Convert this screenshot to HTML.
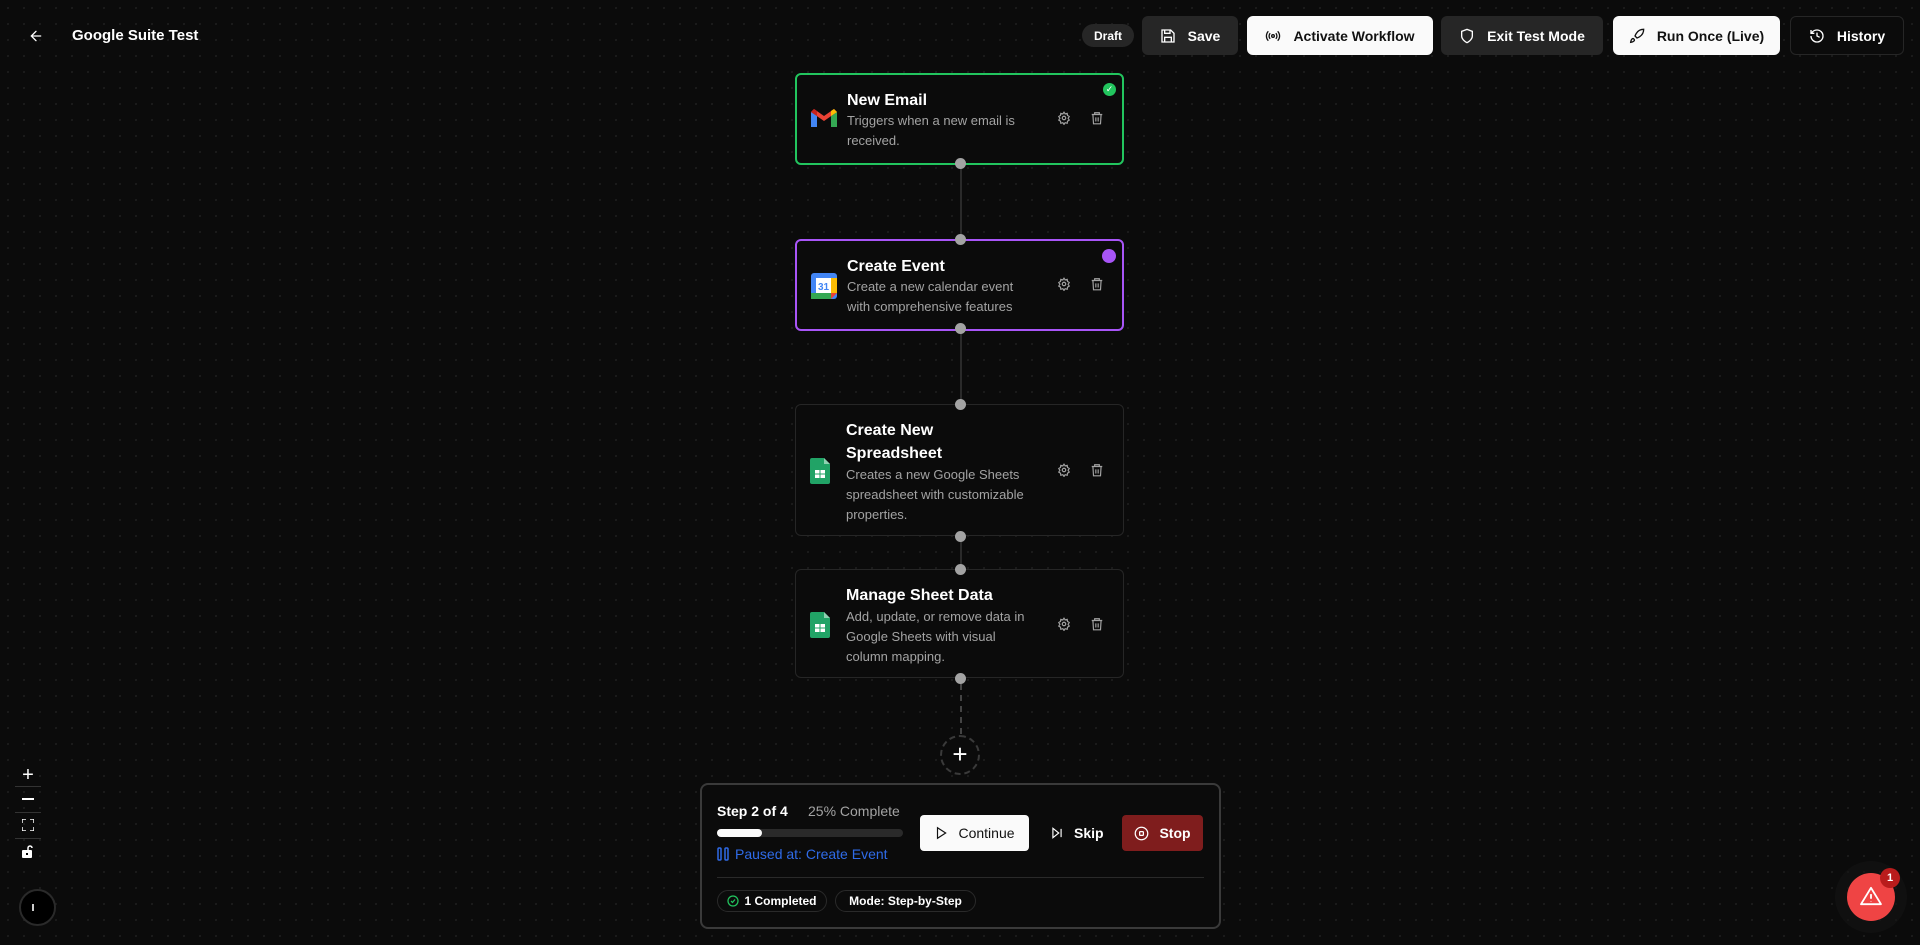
<!DOCTYPE html>
<html><head><meta charset="utf-8"><style>
*{box-sizing:border-box;margin:0;padding:0}
body{width:1920px;height:945px;overflow:hidden;background:#0b0b0b;background-image:radial-gradient(circle,#1c1c1c 1px,transparent 1.2px);background-size:16px 16px;font-family:"Liberation Sans",sans-serif;color:#fff;position:relative}
.a{position:absolute}
.btn{position:absolute;top:16px;height:39px;border-radius:6px;display:flex;align-items:center;justify-content:center;gap:12px;font-size:14px;font-weight:bold}
.dk{background:#262626;color:#fff}
.wt{background:#fafafa;color:#111}
.card{position:absolute;left:795px;width:329px;background:#0b0b0b;border:1px solid #262626;border-radius:6px}
.ttl{position:absolute;left:50px;font-size:16px;font-weight:bold;line-height:23px}
.ds{position:absolute;left:50px;font-size:13px;color:#a3a3a3;line-height:20px;width:200px}
.ic{position:absolute;left:14px}
.dot{position:absolute;left:955px;width:11px;height:11px;border-radius:50%;background:#a3a3a3}
.ln{position:absolute;left:959.5px;width:2px;background:#2a2a2a}
</style></head><body>
<svg class="a" style="left:28px;top:28px" width="16" height="16" viewBox="0 0 24 24" fill="none" stroke="#fff" stroke-width="2" stroke-linecap="round"><path d="M19 12H5M12 19l-7-7 7-7"/></svg>
<div class="a" style="left:72px;top:27px;font-size:15px;font-weight:bold">Google Suite Test</div>
<div class="a" style="left:1082px;top:24px;width:52px;height:23px;border-radius:12px;background:#262626;font-size:12px;font-weight:bold;display:flex;align-items:center;justify-content:center">Draft</div>
<div class="btn dk" style="left:1142px;width:96px"><svg width="16" height="16" viewBox="0 0 24 24" fill="none" stroke="#fff" stroke-width="2"><path d="M5 3h11l5 5v13H3V3zM7 3v5h8V3M7 21v-7h10v7"/></svg>Save</div>
<div class="btn wt" style="left:1247px;width:186px"><svg width="16" height="16" viewBox="0 0 24 24" fill="none" stroke="#111" stroke-width="2"><circle cx="12" cy="12" r="2"/><path d="M16.2 7.8a6 6 0 010 8.4M7.8 16.2a6 6 0 010-8.4M19 5a10 10 0 010 14M5 19A10 10 0 015 5"/></svg>Activate Workflow</div>
<div class="btn dk" style="left:1441px;width:162px"><svg width="16" height="16" viewBox="0 0 24 24" fill="none" stroke="#fff" stroke-width="2"><path d="M12 22s8-4 8-10V5l-8-3-8 3v7c0 6 8 10 8 10z"/></svg>Exit Test Mode</div>
<div class="btn wt" style="left:1613px;width:167px"><svg width="16" height="16" viewBox="0 0 24 24" fill="none" stroke="#111" stroke-width="2"><path d="M4.5 16.5c-1.5 1.3-2 5-2 5s3.7-.5 5-2c.7-.8.7-2.1-.1-2.9-.8-.8-2.1-.8-2.9-.1zM12 15l-3-3a22 22 0 012-4A13 13 0 0122 2c0 2.7-.8 7.5-6 11a22 22 0 01-4 2z"/></svg>Run Once (Live)</div>
<div class="btn" style="left:1790px;width:114px;border:1px solid #262626;background:#0b0b0b"><svg width="16" height="16" viewBox="0 0 24 24" fill="none" stroke="#fff" stroke-width="2"><path d="M3 12a9 9 0 109-9 9.7 9.7 0 00-6.7 2.7L3 8M3 3v5h5M12 7v5l4 2"/></svg>History</div>

<div class="ln" style="top:163px;height:76px"></div>
<div class="ln" style="top:328px;height:76px"></div>
<div class="ln" style="top:536px;height:33px"></div>
<div class="a" style="left:959.5px;top:684px;height:50px;border-left:2px dashed #444"></div>

<div class="card" style="top:73px;height:92px;border:2px solid #22c55e">
<svg class="ic" style="top:34px" width="26" height="20" viewBox="0 0 26 20"><path d="M0 3v15h6V7z" fill="#4285f4"/><path d="M20 7v11h6V3z" fill="#34a853"/><path d="M0 3l13 9 13-9-3-3-10 7L3 0z" fill="#ea4335"/><path d="M20 7l6-4-3-3-3 2z" fill="#fbbc04"/><path d="M0 3l6 4V2L3 0z" fill="#c5221f"/></svg>
<div class="ttl" style="top:14px">New Email</div>
<div class="ds" style="top:36px;width:190px">Triggers when a new email is received.</div>
<div class="a" style="left:306px;top:8px;width:13px;height:13px;border-radius:50%;background:#22c55e;font-size:9px;text-align:center;line-height:13px;color:#fff">✓</div>
</div>
<div class="card" style="top:239px;height:92px;border:2px solid #a855f7">
<svg class="ic" style="top:32px" width="26" height="26" viewBox="0 0 26 26"><rect x="0" y="0" width="26" height="26" rx="3" fill="#4285f4"/><rect x="20" y="5" width="6" height="15" fill="#fbbc04"/><rect x="0" y="20" width="20" height="6" fill="#34a853"/><path d="M20 20h6l-6 6z" fill="#ea4335"/><rect x="5" y="5" width="15" height="15" fill="#fff"/><text x="12.5" y="17" font-size="10" font-weight="bold" fill="#4285f4" text-anchor="middle" font-family="Liberation Sans">31</text></svg>
<div class="ttl" style="top:14px">Create Event</div>
<div class="ds" style="top:36px;width:185px">Create a new calendar event with comprehensive features</div>
<div class="a" style="left:305px;top:8px;width:14px;height:14px;border-radius:50%;background:#a855f7"></div>
</div>
<div class="card" style="top:404px;height:132px">
<svg class="ic" style="top:53px" width="20" height="26" viewBox="0 0 20 26"><path d="M2 0h12l6 6v18a2 2 0 01-2 2H2a2 2 0 01-2-2V2a2 2 0 012-2z" fill="#21a366"/><path d="M14 0v6h6z" fill="#8ed1b1"/><rect x="5" y="12" width="10" height="8" fill="#fff"/><path d="M5 16h10M10 12v8" stroke="#21a366" stroke-width="1"/></svg>
<div class="ttl" style="top:14px">Create New<br>Spreadsheet</div>
<div class="ds" style="top:60px;width:205px">Creates a new Google Sheets spreadsheet with customizable properties.</div>
</div>
<div class="card" style="top:569px;height:109px">
<svg class="ic" style="top:42px" width="20" height="26" viewBox="0 0 20 26"><path d="M2 0h12l6 6v18a2 2 0 01-2 2H2a2 2 0 01-2-2V2a2 2 0 012-2z" fill="#21a366"/><path d="M14 0v6h6z" fill="#8ed1b1"/><rect x="5" y="12" width="10" height="8" fill="#fff"/><path d="M5 16h10M10 12v8" stroke="#21a366" stroke-width="1"/></svg>
<div class="ttl" style="top:14px">Manage Sheet Data</div>
<div class="ds" style="top:37px;width:196px">Add, update, or remove data in<br>Google Sheets with visual<br>column mapping.</div>
</div>

<svg class="a" style="left:1057px;top:111px" width="14" height="14" viewBox="0 0 24 24" fill="none" stroke="#a3a3a3" stroke-width="2"><circle cx="12" cy="12" r="3"/><path d="M12 2l2 3 3.5-1 .5 3.5 3 2-2 3 2 3-3 2-.5 3.5L14 20l-2 3-2-3-3.5 1L6 17.5l-3-2 2-3-2-3 3-2L6.5 4 10 5z"/></svg>
<svg class="a" style="left:1090px;top:111px" width="14" height="14" viewBox="0 0 24 24" fill="none" stroke="#a3a3a3" stroke-width="2"><path d="M3 6h18M8 6V3h8v3M5 6l1 16h12l1-16M10 11v7M14 11v7"/></svg>
<svg class="a" style="left:1057px;top:277px" width="14" height="14" viewBox="0 0 24 24" fill="none" stroke="#a3a3a3" stroke-width="2"><circle cx="12" cy="12" r="3"/><path d="M12 2l2 3 3.5-1 .5 3.5 3 2-2 3 2 3-3 2-.5 3.5L14 20l-2 3-2-3-3.5 1L6 17.5l-3-2 2-3-2-3 3-2L6.5 4 10 5z"/></svg>
<svg class="a" style="left:1090px;top:277px" width="14" height="14" viewBox="0 0 24 24" fill="none" stroke="#a3a3a3" stroke-width="2"><path d="M3 6h18M8 6V3h8v3M5 6l1 16h12l1-16M10 11v7M14 11v7"/></svg>
<svg class="a" style="left:1057px;top:463px" width="14" height="14" viewBox="0 0 24 24" fill="none" stroke="#a3a3a3" stroke-width="2"><circle cx="12" cy="12" r="3"/><path d="M12 2l2 3 3.5-1 .5 3.5 3 2-2 3 2 3-3 2-.5 3.5L14 20l-2 3-2-3-3.5 1L6 17.5l-3-2 2-3-2-3 3-2L6.5 4 10 5z"/></svg>
<svg class="a" style="left:1090px;top:463px" width="14" height="14" viewBox="0 0 24 24" fill="none" stroke="#a3a3a3" stroke-width="2"><path d="M3 6h18M8 6V3h8v3M5 6l1 16h12l1-16M10 11v7M14 11v7"/></svg>
<svg class="a" style="left:1057px;top:617px" width="14" height="14" viewBox="0 0 24 24" fill="none" stroke="#a3a3a3" stroke-width="2"><circle cx="12" cy="12" r="3"/><path d="M12 2l2 3 3.5-1 .5 3.5 3 2-2 3 2 3-3 2-.5 3.5L14 20l-2 3-2-3-3.5 1L6 17.5l-3-2 2-3-2-3 3-2L6.5 4 10 5z"/></svg>
<svg class="a" style="left:1090px;top:617px" width="14" height="14" viewBox="0 0 24 24" fill="none" stroke="#a3a3a3" stroke-width="2"><path d="M3 6h18M8 6V3h8v3M5 6l1 16h12l1-16M10 11v7M14 11v7"/></svg>

<div class="dot" style="top:158px"></div><div class="dot" style="top:234px"></div><div class="dot" style="top:323px"></div><div class="dot" style="top:399px"></div><div class="dot" style="top:531px"></div><div class="dot" style="top:564px"></div><div class="dot" style="top:673px"></div>

<div class="a" style="left:940px;top:735px;width:40px;height:40px;border-radius:50%;border:2px dashed #3a3a3a;background:#0b0b0b;font-size:26px;line-height:34px;text-align:center;color:#fff">+</div>

<div class="a" style="left:700px;top:783px;width:521px;height:146px;border:2px solid #3a3a3a;border-radius:8px;background:#0b0b0b">
<div class="a" style="left:15px;top:18px;font-size:14px;font-weight:bold">Step 2 of 4</div>
<div class="a" style="left:106px;top:18px;font-size:14px;color:#a3a3a3">25% Complete</div>
<div class="a" style="left:15px;top:44px;width:186px;height:8px;border-radius:4px;background:#2a2a2a"><div style="width:45px;height:8px;border-radius:4px;background:#fafafa"></div></div>
<div class="a" style="left:15px;top:61px;font-size:14px;color:#2f6be8;display:flex;align-items:center;gap:6px"><svg width="12" height="14" viewBox="0 0 12 14" fill="none" stroke="#2f6be8" stroke-width="1.5"><rect x="1" y="1" width="3" height="12" rx="1"/><rect x="8" y="1" width="3" height="12" rx="1"/></svg>Paused at: Create Event</div>
<div class="a" style="left:218px;top:30px;width:109px;height:36px;border-radius:4px;background:#fafafa;color:#111;font-size:14px;display:flex;align-items:center;justify-content:center;gap:10px"><svg width="14" height="14" viewBox="0 0 24 24" fill="none" stroke="#111" stroke-width="2"><path d="M6 3l14 9-14 9z"/></svg>Continue</div>
<div class="a" style="left:348px;top:30px;height:36px;font-size:14px;font-weight:bold;display:flex;align-items:center;gap:10px"><svg width="14" height="14" viewBox="0 0 24 24" fill="none" stroke="#fff" stroke-width="2"><path d="M5 4l10 8-10 8zM19 5v14"/></svg>Skip</div>
<div class="a" style="left:420px;top:30px;width:81px;height:36px;border-radius:4px;background:#7f1d1d;font-size:14px;font-weight:bold;display:flex;align-items:center;justify-content:center;gap:10px"><svg width="15" height="15" viewBox="0 0 24 24" fill="none" stroke="#fff" stroke-width="2"><circle cx="12" cy="12" r="10"/><rect x="9" y="9" width="6" height="6" rx="1"/></svg>Stop</div>
<div class="a" style="left:15px;top:92px;width:487px;height:1px;background:#2a2a2a"></div>
<div class="a" style="left:15px;top:105px;width:110px;height:22px;border:1px solid #2a2a2a;border-radius:11px;font-size:12px;font-weight:bold;display:flex;align-items:center;justify-content:center;gap:5px"><svg width="12" height="12" viewBox="0 0 24 24" fill="none" stroke="#22c55e" stroke-width="2.5"><circle cx="12" cy="12" r="10"/><path d="M8 12l3 3 5-6"/></svg>1 Completed</div>
<div class="a" style="left:133px;top:105px;width:141px;height:22px;border:1px solid #2a2a2a;border-radius:11px;font-size:12px;font-weight:bold;display:flex;align-items:center;justify-content:center">Mode: Step-by-Step</div>
</div>

<div class="a" style="left:15px;top:765px;width:26px;text-align:center;font-size:20px;line-height:20px">+</div>
<div class="a" style="left:15px;top:786px;width:26px;height:1px;background:#333"></div>
<div class="a" style="left:22px;top:798px;width:12px;height:2px;background:#fff"></div>
<div class="a" style="left:15px;top:812px;width:26px;height:1px;background:#333"></div>
<svg class="a" style="left:22px;top:819px" width="12" height="12" viewBox="0 0 12 12" fill="none" stroke="#fff" stroke-width="1.5"><path d="M0 4V0h4M8 0h4v4M12 8v4H8M4 12H0V8"/></svg>
<div class="a" style="left:15px;top:838px;width:26px;height:1px;background:#333"></div>
<svg class="a" style="left:22px;top:845px" width="11" height="13" viewBox="0 0 11 13"><rect x="0" y="5" width="10" height="8" rx="1" fill="#fff"/><path d="M6 5V3a2 2 0 014 0" stroke="#fff" stroke-width="1.5" fill="none"/><rect x="4" y="8" width="2" height="2" fill="#000"/></svg>
<div class="a" style="left:19px;top:889px;width:37px;height:37px;border-radius:50%;background:#000;border:2px solid #2a2a2a"></div>
<div class="a" style="left:32px;top:904px;width:1.5px;height:7px;background:#ccc"></div>

<div class="a" style="left:1847px;top:873px;width:48px;height:48px;border-radius:50%;background:#ef4444;box-shadow:0 0 0 12px rgba(20,20,20,.6)"></div>
<svg class="a" style="left:1860px;top:886px" width="22" height="20" viewBox="0 0 24 22" fill="none" stroke="#fff" stroke-width="2" stroke-linejoin="round"><path d="M12 2L1 20h22zM12 9v5M12 17v.5"/></svg>
<div class="a" style="left:1880px;top:868px;width:20px;height:20px;border-radius:50%;background:#b91c1c;font-size:11px;font-weight:bold;text-align:center;line-height:20px">1</div>
</body></html>
